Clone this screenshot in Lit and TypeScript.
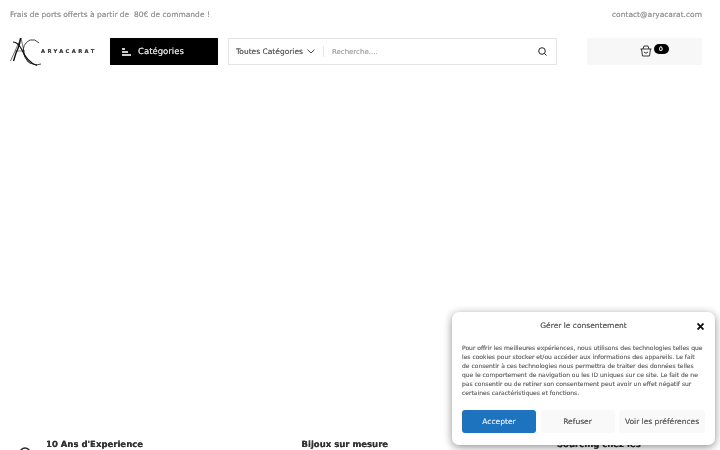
import { LitElement, html, css } from "lit";
import { customElement } from "lit/decorators.js";

@customElement("app-root")
export class AppRoot extends LitElement {
  static styles = css`
    :host { display: block; position: relative; width: 720px; height: 450px; overflow: hidden; font-family: "DejaVu Sans", sans-serif; color: #222; text-rendering: geometricPrecision; will-change: transform; text-shadow: 0 0 .5px currentColor; }
    * { box-sizing: border-box; }
    .top { display: flex; justify-content: space-between; align-items: center; height: 29px; padding: 0 18px 1px 10px; font-size: 7.5px; color: #999; white-space: pre; }
    .head { display: flex; align-items: stretch; height: 27px; margin-top: 9px; padding-left: 10px; }
    .logo { width: 100px; position: relative; flex: none; }
    .logo svg { position: absolute; left: 0; top: -1px; }
    .logo span { position: absolute; left: 31px; top: 10px; font-size: 5.2px; letter-spacing: 2.4px; color: #444; line-height: 8px; font-weight: 700; }
    .cat { width: 108px; flex: none; background: #000; color: #fff; display: flex; align-items: center; gap: 7px; padding-left: 12px; font-size: 8.500px; }
    .cat span { color: #ddd; }
    .search { width: 329px; flex: none; margin-left: 10px; border: 1px solid #e4e4e4; display: flex; align-items: center; padding: 0 9px 0 7px; }
    .sel { display: flex; align-items: center; gap: 4px; font-size: 7.5px; color: #666; }
    .sep { width: 1px; height: 11px; background: #e6e6e6; margin: 0 8px 0 8px; }
    .ph { flex: 1; font-size: 7px; color: #aaa; }
    .cart { width: 115px; flex: none; margin-left: 30px; background: #f7f7f7; display: flex; align-items: center; justify-content: center; gap: 2px; padding-left: 19px; }
    .cart svg { margin-top: -1px; }
    .badge { width: 15px; height: 10px; border-radius: 5px; background: #000; color: #fff; font-size: 6px; display: flex; align-items: center; justify-content: center; margin-top: -5px; }
    .main { height: 374px; }
    .feat { display: grid; grid-template-columns: 255.5px 255.5px 1fr; padding-left: 19px; }
    .f { display: flex; gap: 9px; font-size: 8.500px; font-weight: 700; color: #333; line-height: 12px; }
    .f svg { margin-top: 6px; flex: none; }
    .f b { font-weight: 700; }
    .f.no { padding-left: 27px; }
    .modal { position: absolute; left: 452px; top: 312px; width: 263px; height: 133px; background: #fff; border-radius: 7px; box-shadow: 0 2px 9px rgba(0,0,0,.45); padding: 0 10px; }
    .title { position: relative; height: 32px; padding-top: 8px; text-align: center; font-size: 7.5px; line-height: 11px; color: #666; }
    .close { position: absolute; right: 1px; top: 11px; }
    .body { font-size: 6px; line-height: 9px; color: #777; white-space: pre; margin: 0; }
    .btns { display: grid; grid-template-columns: 74px 74px 86px; justify-content: space-between; margin-top: 12px; }
    .btn { height: 23px; border-radius: 3px; background: #f9f9f9; display: flex; align-items: center; justify-content: center; font-size: 7.5px; color: #666; white-space: nowrap; }
    .btn.p { background: #1e73be; color: #d5e5f3; }
  `;
  render() {
    return html`
      <div class="top"><span>Frais de ports offerts à partir de  80€ de commande !</span><span>contact@aryacarat.com</span></div>
      <div class="head">
        <div class="logo">
          <svg width="32" height="30" viewBox="0 0 32 30" fill="none" stroke="#111">
            <path d="M.5 24 L11 1 L15 19 Q17 26 21 27" stroke-width=".6"/>
            <path d="M10.500 1 Q10 8 6 16 L3.500 24" stroke-width="1.400"/>
            <path d="M3 5 Q8 5 12 13 Q17 25 27 28.500" stroke-width="1.200"/>
            <path d="M29 6 Q25 1.500 20 3 Q12 7 13.500 16 Q15.500 25 24 27.500 Q28 28 31 27" stroke-width=".8"/>
            <path d="M5 14 H15" stroke-width=".5"/>
          </svg>
          <span>ARYACARAT</span>
        </div>
        <div class="cat">
          <svg width="9" height="8" viewBox="0 0 9 8" fill="#ccc"><rect x="0" y="0" width="3" height="2"/><rect x="0" y="3" width="6" height="2"/><rect x="0" y="6" width="9" height="2"/></svg>
          <span>Catégories</span>
        </div>
        <div class="search">
          <div class="sel">Toutes Catégories
            <svg width="8" height="5" viewBox="0 0 8 5" fill="none" stroke="#333" stroke-width=".9"><path d="M.5 .7 L4 4 L7.500 .7"/></svg>
          </div>
          <div class="sep"></div>
          <div class="ph">Recherche....</div>
          <svg width="9" height="9" viewBox="0 0 9 9" fill="none" stroke="#222" stroke-width="1"><circle cx="4" cy="4" r="3.300"/><path d="M6.500 6.500 L8.500 8.500"/></svg>
        </div>
        <div class="cart">
          <svg width="12" height="12" viewBox="0 0 12 12" fill="none" stroke="#222" stroke-width=".9"><path d="M.5 4 H11.500 M1.500 4 L2.500 11 H9.500 L10.500 4 M3 4 L4 1 M9 4 L8 1 M4 1 H8 M4 7 Q6 9.500 8 7"/></svg>
          <span class="badge">0</span>
        </div>
      </div>
      <div class="main"></div>
      <div class="feat">
        <div class="f"><svg width="18" height="18" viewBox="0 0 18 18" fill="none" stroke="#222" stroke-width="1.500"><circle cx="6" cy="8" r="5"/></svg><b>10 Ans d'Experience</b></div>
        <div class="f no"><b>Bijoux sur mesure</b></div>
        <div class="f no"><b>Sourcing chez les</b></div>
      </div>
      <div class="modal">
        <div class="title">Gérer le consentement
          <svg class="close" width="7" height="7" viewBox="0 0 7 7" stroke="#111" stroke-width="1.800"><path d="M.5 .5 L6.500 6.500 M6.500 .5 L.5 6.500"/></svg>
        </div>
        <p class="body">Pour offrir les meilleures expériences, nous utilisons des technologies telles que
les cookies pour stocker et/ou accéder aux informations des appareils. Le fait
de consentir à ces technologies nous permettra de traiter des données telles
que le comportement de navigation ou les ID uniques sur ce site. Le fait de ne
pas consentir ou de retirer son consentement peut avoir un effet négatif sur
certaines caractéristiques et fonctions.</p>
        <div class="btns">
          <div class="btn p">Accepter</div>
          <div class="btn">Refuser</div>
          <div class="btn">Voir les préférences</div>
        </div>
      </div>
    `;
  }
}
